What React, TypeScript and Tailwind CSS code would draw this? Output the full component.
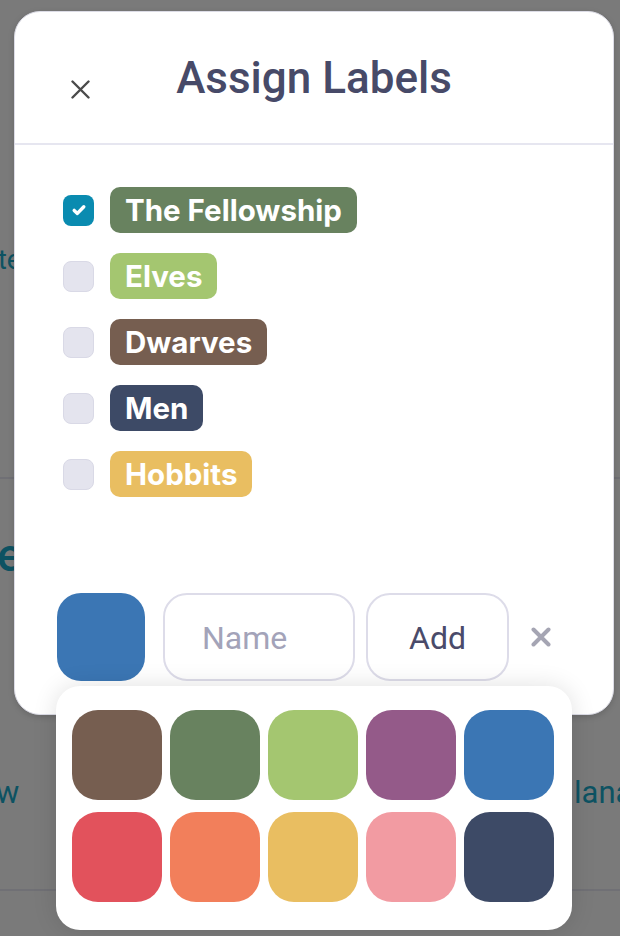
import React from "react";

const labels = [
  { name: "The Fellowship", color: "bg-[#68825f]", checked: true },
  { name: "Elves", color: "bg-[#a4c670]", checked: false },
  { name: "Dwarves", color: "bg-[#765e50]", checked: false },
  { name: "Men", color: "bg-[#3d4a66]", checked: false },
  { name: "Hobbits", color: "bg-[#e9be61]", checked: false },
];

const swatches = [
  "bg-[#765e50]",
  "bg-[#68825f]",
  "bg-[#a4c670]",
  "bg-[#945a89]",
  "bg-[#3b76b4]",
  "bg-[#e2525c]",
  "bg-[#f27f5b]",
  "bg-[#e9be61]",
  "bg-[#f29ba2]",
  "bg-[#3d4a66]",
];

function Checkbox({ checked }: { checked: boolean }) {
  if (checked) {
    return (
      <div className="w-[31px] h-[31px] rounded-[8px] bg-[#0a8bb0] flex items-center justify-center shrink-0">
        <svg width="16" height="16" viewBox="0 0 16 16" fill="none">
          <path
            d="M3.2 8.4 L6.4 11.4 L12.8 4.8"
            stroke="white"
            strokeWidth="3.4"
            strokeLinecap="round"
            strokeLinejoin="round"
          />
        </svg>
      </div>
    );
  }
  return (
    <div className="w-[31px] h-[31px] rounded-[8px] bg-[#e4e4ee] border border-[#d9d9e6] shrink-0" />
  );
}

export default function App() {
  return (
    <div
      className="relative w-[620px] h-[936px] overflow-hidden bg-[#7a7a7a]"
      style={{ fontFamily: "Roboto, 'Liberation Sans', sans-serif" }}
    >
      {/* underlying page (dimmed) */}
      <div className="absolute left-[-2px] top-[247px] text-[27px] leading-none text-[#0d5262]">
        te
      </div>
      <div className="absolute left-0 top-[477px] w-[620px] h-[2px] bg-[#707075]" />
      <div className="absolute left-[-3px] top-[532px] text-[46px] leading-none font-medium text-[#0d5262]">
        e
      </div>
      <div className="absolute left-[-4px] top-[777px] text-[31px] leading-none text-[#0d5262]">
        w
      </div>
      <div className="absolute left-[574px] top-[777px] text-[31px] leading-none text-[#0d5262] whitespace-nowrap">
        lana
      </div>
      <div className="absolute left-0 top-[889px] w-[620px] h-[2px] bg-[#707075]" />

      {/* modal */}
      <div className="absolute left-[14px] top-[11px] w-[600px] h-[704px] bg-white rounded-[26px] border border-[#dcdce6] shadow-[0_2px_6px_rgba(0,0,0,0.15)] flex flex-col">
        <div className="relative h-[131px] flex items-center justify-center">
          <button className="absolute left-[52px] top-[64px] w-[26px] h-[26px] flex items-center justify-center">
            <svg width="19" height="19" viewBox="0 0 19 19" fill="none">
              <path d="M1.5 1.5 L17.5 17.5 M17.5 1.5 L1.5 17.5" stroke="#4a4a4a" strokeWidth="2.4" strokeLinecap="round" />
            </svg>
          </button>
          <h1 className="text-[44px] font-medium text-[#474a68] leading-none mt-[1px]">Assign Labels</h1>
        </div>
        <div className="h-[2px] bg-[#e6e6f0]" />

        <div className="flex flex-col gap-[20px] pt-[42px] pl-[48px]">
          {labels.map((l) => (
            <div key={l.name} className="flex items-center gap-[16px] h-[46px]">
              <Checkbox checked={l.checked} />
              <div
                className={`${l.color} h-[46px] rounded-[10px] px-[15px] flex items-center text-white font-bold text-[29.5px]`}
                style={{ fontFamily: "Inter, 'Noto Sans', sans-serif" }}
              >
                {l.name}
              </div>
            </div>
          ))}
        </div>

        <div className="flex items-center pl-[42px] mt-auto mb-[33px]">
          <div className="w-[88px] h-[88px] rounded-[24px] bg-[#3b76b4] shrink-0" />
          <div className="ml-[18px] w-[192px] h-[88px] rounded-[24px] border-2 border-[#dddce9] flex items-center pl-[37px] pt-[2px] text-[32px] text-[#a3a3b9]">
            Name
          </div>
          <div className="ml-[11px] w-[143px] h-[88px] rounded-[24px] border-2 border-[#dddce9] flex items-center justify-center pt-[2px] text-[32px] text-[#4a4b6a]">
            Add
          </div>
          <div className="ml-[21px] w-[22px] h-[22px] flex items-center justify-center">
            <svg width="20" height="20" viewBox="0 0 20 20" fill="none">
              <path d="M2.5 2.5 L17.5 17.5 M17.5 2.5 L2.5 17.5" stroke="#a5a5b3" strokeWidth="4" strokeLinecap="round" />
            </svg>
          </div>
        </div>
      </div>

      {/* color popover */}
      <div className="absolute left-[56px] top-[686px] w-[516px] h-[244px] bg-white rounded-[24px] shadow-[0_0_24px_rgba(0,0,0,0.12)] pt-[24px] pl-[16px] pr-[18px]">
        <div className="grid grid-cols-5 gap-x-[8px] gap-y-[12px]">
          {swatches.map((c, i) => (
            <div key={i} className={`${c} h-[90px] rounded-[26px]`} />
          ))}
        </div>
      </div>
    </div>
  );
}
